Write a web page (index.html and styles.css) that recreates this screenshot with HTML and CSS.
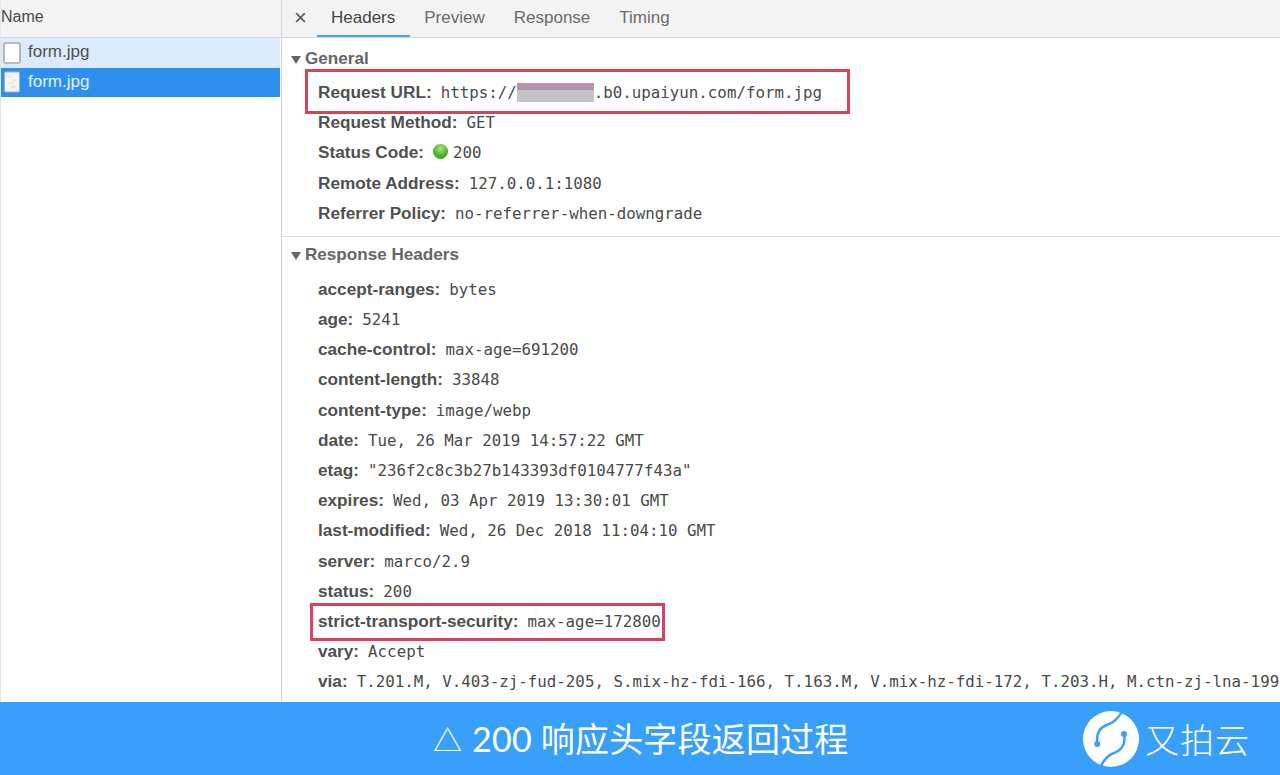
FILE: index.html
```html
<!DOCTYPE html>
<html lang="zh">
<head>
<meta charset="utf-8">
<title>200 响应头字段返回过程</title>
<link rel="stylesheet" href="styles.css">
</head>
<body>
<div class="devtools">
  <aside class="names">
    <div class="names-head">Name</div>
    <div class="file file-hover">
      <svg class="file-icon" width="18" height="22" viewBox="0 0 18 22"><rect x="1" y="1" width="16" height="20" rx="1.5" fill="#fff" stroke="#a9a9a9" stroke-width="1.6"/></svg>
      <span>form.jpg</span>
    </div>
    <div class="file file-selected">
      <svg class="file-icon" width="18" height="22" viewBox="0 0 18 22"><rect x="1.5" y="1" width="15" height="20" rx="1" fill="#f7f4f3" stroke="#8fb4dc" stroke-width="1"/><path d="M5 6h4M10 9h4M5 12h5M8 16h5" stroke="#f0e2dc" stroke-width="2"/></svg>
      <span>form.jpg</span>
    </div>
  </aside>
  <main class="detail">
    <nav class="tabs">
      <span class="close">×</span>
      <span class="tab tab-active">Headers</span>
      <span class="tab">Preview</span>
      <span class="tab">Response</span>
      <span class="tab">Timing</span>
    </nav>
    <section class="group group-general">
      <h2 class="group-title"><i class="caret"></i>General</h2>
      <div class="row"><b>Request URL:</b><code>https://<span class="blur"></span>.b0.upaiyun.com/form.jpg</code></div>
      <div class="row"><b>Request Method:</b><code>GET</code></div>
      <div class="row"><b>Status Code:</b><i class="dot"></i><code>200</code></div>
      <div class="row"><b>Remote Address:</b><code>127.0.0.1:1080</code></div>
      <div class="row"><b>Referrer Policy:</b><code>no-referrer-when-downgrade</code></div>
      <div class="mark mark-url"></div>
    </section>
    <section class="group group-response">
      <h2 class="group-title"><i class="caret"></i>Response Headers</h2>
      <div class="row"><b>accept-ranges:</b><code>bytes</code></div>
      <div class="row"><b>age:</b><code>5241</code></div>
      <div class="row"><b>cache-control:</b><code>max-age=691200</code></div>
      <div class="row"><b>content-length:</b><code>33848</code></div>
      <div class="row"><b>content-type:</b><code>image/webp</code></div>
      <div class="row"><b>date:</b><code>Tue, 26 Mar 2019 14:57:22 GMT</code></div>
      <div class="row"><b>etag:</b><code>"236f2c8c3b27b143393df0104777f43a"</code></div>
      <div class="row"><b>expires:</b><code>Wed, 03 Apr 2019 13:30:01 GMT</code></div>
      <div class="row"><b>last-modified:</b><code>Wed, 26 Dec 2018 11:04:10 GMT</code></div>
      <div class="row"><b>server:</b><code>marco/2.9</code></div>
      <div class="row"><b>status:</b><code>200</code></div>
      <div class="row"><b>strict-transport-security:</b><code>max-age=172800</code></div>
      <div class="row"><b>vary:</b><code>Accept</code></div>
      <div class="row"><b>via:</b><code>T.201.M, V.403-zj-fud-205, S.mix-hz-fdi-166, T.163.M, V.mix-hz-fdi-172, T.203.H, M.ctn-zj-lna-199</code></div>
      <div class="mark mark-sts"></div>
    </section>
  </main>
</div>
<footer class="banner">
  <div class="caption"><span class="caption-mark">△</span> 200 响应头字段返回过程</div>
  <div class="brand">
    <svg class="brand-logo" width="56" height="56" viewBox="5 5 56 56">
      <circle cx="33" cy="33" r="28" fill="#fff"/>
      <path d="M19.3 38 C18 28 22 21 30 18.5 C36 16.5 40 13 45 4" fill="none" stroke="#389ffb" stroke-width="2.4"/>
      <path d="M46 28 C48 38 44 44 36 47 C30 49 26 53 22 62" fill="none" stroke="#389ffb" stroke-width="2.4"/>
      <circle cx="19.3" cy="38" r="3" fill="#389ffb"/>
      <circle cx="46" cy="28" r="3" fill="#389ffb"/>
    </svg>
    <span class="brand-name">又拍云</span>
  </div>
</footer>
</body>
</html>
```
FILE: styles.css
```css
* { box-sizing: border-box; }
html, body { margin: 0; padding: 0; }
body {
  width: 1280px;
  height: 775px;
  overflow: hidden;
  background: #fff;
  font-family: "Liberation Sans", Arial, sans-serif;
  color: #505050;
  display: flex;
  flex-direction: column;
}
.devtools { display: flex; height: 702px; overflow: hidden; }
.names {
  width: 282px;
  flex: none;
  border-right: 1px solid #d4d4d4;
  border-left: 1px solid #e4e4e4;
}
.names-head {
  height: 38px;
  background: #f3f3f3;
  border-bottom: 1px solid #d6d6d6;
  font-size: 16px;
  line-height: 33px;
  color: #4a4a4a;
}
.file {
  display: flex;
  align-items: center;
  gap: 7px;
  height: 29.5px;
  font-size: 17px;
  padding-left: 2px;
  margin-right: 1px;
}
.file-hover span { position: relative; top: -1px; }
.file-icon { flex: none; }
.file-hover { background: #dcebfb; color: #4c5259; }
.file-selected { background: #2f8fee; color: #e4f1fe; }
.detail { flex: 1; min-width: 0; }
.tabs {
  height: 38px;
  background: #f3f3f3;
  border-bottom: 1px solid #d6d6d6;
  display: flex;
  font-size: 17px;
  line-height: 35px;
  color: #6b6b6b;
}
.close {
  width: 34.5px;
  padding-left: 12px;
  font-size: 22px;
  color: #555;
}
.tab { padding: 0 14.5px; height: 37px; }
.tab-active {
  color: #454545;
  border-bottom: 2px solid #4aa3dc;
}
.group { position: relative; }
.group-general { height: 199px; border-bottom: 1px solid #dcdcdc; padding-top: 9px; }
.group-response { padding-top: 6px; }
.group-title {
  margin: 0;
  font-size: 17.1px;
  line-height: 24px;
  font-weight: 700;
  color: #666;
  padding-left: 9px;
  display: flex;
  align-items: center;
}
.group-general .group-title { margin-bottom: 6.4px; }
.group-response .group-title { margin-bottom: 7.3px; }
.caret {
  width: 0;
  height: 0;
  border-left: 5px solid transparent;
  border-right: 5px solid transparent;
  border-top: 8px solid #666;
  margin-right: 4px;
  margin-top: 2px;
}
.row {
  height: 30.2px;
  padding-left: 36px;
  display: flex;
  align-items: center;
  white-space: nowrap;
}
.row b {
  font-size: 17.2px;
  font-weight: 700;
  color: #505050;
  margin-right: 9px;
}
.row code {
  font-family: "DejaVu Sans Mono", "Liberation Mono", monospace;
  font-size: 15.8px;
  color: #4a4a4a;
}
.blur {
  display: inline-block;
  width: 77px;
  height: 19px;
  vertical-align: -4px;
  background: linear-gradient(#b393ad 0 7px, #c6c3c8 7px 100%);
}
.dot {
  width: 15px;
  height: 15px;
  margin-right: 5px;
  margin-top: -2px;
  border-radius: 50%;
  background: radial-gradient(circle at 50% 30%, #a8e48c, #49b52a 55%, #2f9a1c);
}
.mark {
  position: absolute;
  border: 3.5px solid #d8435a;
  pointer-events: none;
}
.mark-url { left: 23px; top: 31px; width: 545px; height: 45px; }
.mark-sts { left: 28px; top: 366px; width: 355px; height: 38px; }
.banner {
  height: 73px;
  background: #389ffb;
  display: flex;
  align-items: center;
  position: relative;
  color: #fff;
  font-family: "Noto Sans CJK SC", sans-serif;
}
.caption {
  position: absolute;
  left: 433px;
  top: 10px;
  font-size: 34px;
  letter-spacing: 0.2px;
  line-height: 54px;
  white-space: nowrap;
  font-family: "Lato", "Noto Sans CJK SC", sans-serif;
}
.caption-mark { font-size: 29px; margin-right: 1px; }
.brand {
  margin-left: auto;
  margin-right: 30px;
  display: flex;
  align-items: center;
  gap: 6px;
}
.brand-name { font-size: 34px; font-weight: 300; letter-spacing: 1px; line-height: 1; }
```
